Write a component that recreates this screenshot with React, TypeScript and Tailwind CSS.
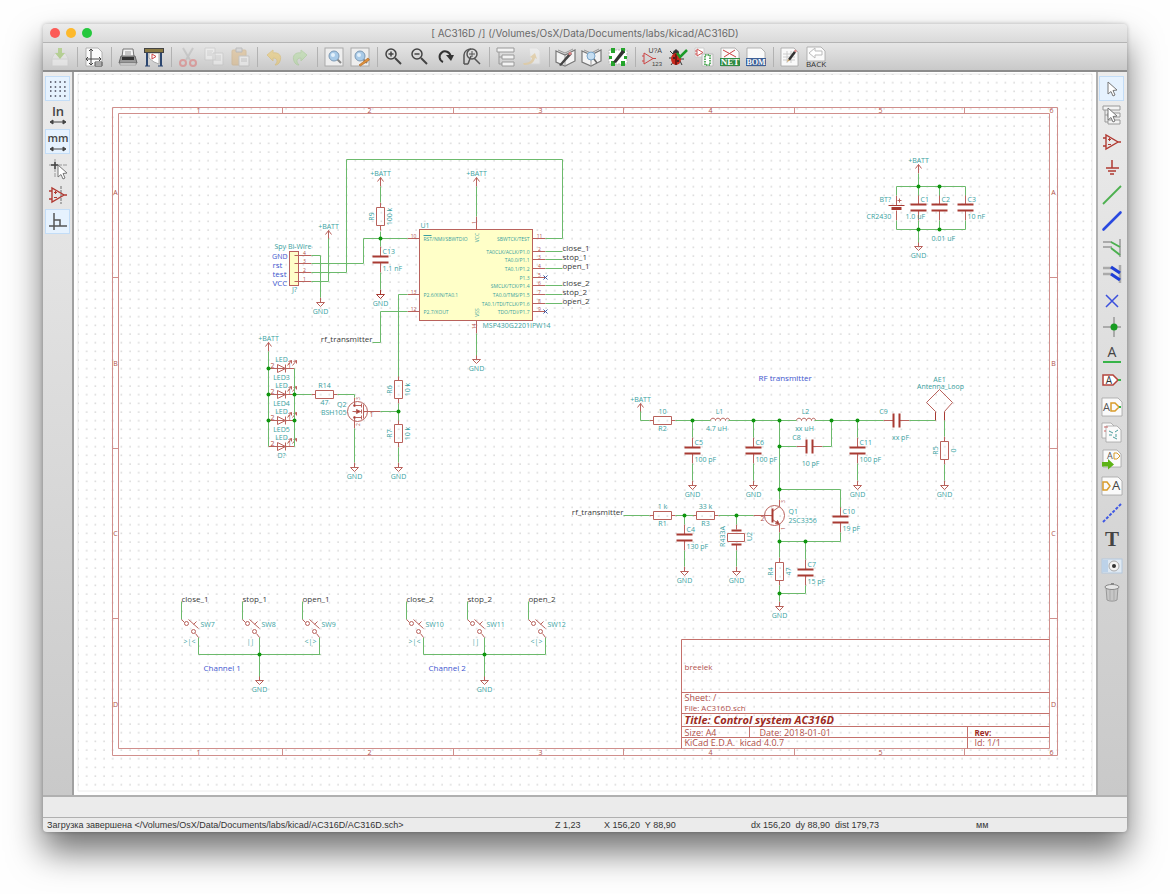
import { type ReactNode } from "react";
import clsx from "clsx";

/* ---------- toolbar icons (20x20) ---------- */

const Icon = ({ children, faded }: { children: ReactNode; faded?: boolean }) => (
  <svg
    viewBox="0 0 20 20"
    className={clsx("h-5 w-5 overflow-visible", faded && "opacity-40")}
    fill="none"
    aria-hidden="true"
  >
    {children}
  </svg>
);

const Sheet = ({ x = 2, y = 1, w = 16, h = 18 }: { x?: number; y?: number; w?: number; h?: number }) => (
  <path
    d={`M${x} ${y}h${w - 4}l4 4v${h - 4}h${-w}z`}
    fill="#fafafa"
    stroke="#a3a3a3"
    strokeWidth=".8"
  />
);

const Pencil = () => (
  <>
    <path d="M8 12l6-8 2 1.500-6 8z" fill="#333" />
    <path d="M14 4l1-1.500 2 1.500-1 1.500z" fill="#d88" />
    <path d="M8 12l-1 3 3-1.500z" fill="#c9a36a" />
  </>
);

const Book = () => (
  <>
    <path d="M0 4l9 4 10-5v11l-10 5-9-4z" fill="#f4f4f4" stroke="#777" strokeWidth="1.200" />
    <path d="M9 8v11M2 3l7 3 8-4" stroke="#999" />
  </>
);

const Amp = () => (
  <>
    <path d="M4 3v14l12-7zM1 6h3M1 14h3M16 10h3" stroke="#b03a32" strokeWidth="1.400" />
    <path d="M6 7.500h3M7.500 6v3M6 12.500h3" stroke="#b03a32" />
  </>
);

const Cursor = ({ dx = 0, dy = 0 }: { dx?: number; dy?: number }) => (
  <path
    transform={`translate(${dx} ${dy})`}
    d="M6 3v12l3-2.500 2 4.500 2-1-2-4.500 4-.5z"
    fill="#fff"
    stroke="#777"
  />
);

const Tree = () => (
  <>
    <path d="M3 5v12M3 10h4M3 17h4" stroke="#999" />
    <path d="M1 1h17v4H1zM6 8h12v4H6zM6 15h12v4H6z" fill="#f3f3f3" stroke="#999" />
  </>
);

const Lens = () => (
  <>
    <rect x="1" y="1" width="18" height="18" fill="#eee" stroke="#aaa" />
    <path d="M13 12l4 4" stroke="#888" strokeWidth="2" />
    <circle cx="10" cy="9" r="5" fill="#a9cbe8" stroke="#7d9ab5" />
    <circle cx="9" cy="8" r="2" fill="#e3f1fb" />
  </>
);

const Magnifier = ({ plus }: { plus?: boolean }) => (
  <>
    <circle cx="7" cy="7" r="5" stroke="#444" strokeWidth="1.500" />
    <path d="M11 11l6 6" stroke="#444" strokeWidth="2" />
    <path d={plus ? "M4.500 7h5M7 4.500v5" : "M4.500 7h5"} stroke="#444" strokeWidth="1.500" />
  </>
);

type Tool = { name: string; icon: ReactNode; faded?: boolean; active?: boolean };

const mainTools: (Tool | null)[] = [
  {
    name: "Save", faded: true, icon: (
      <>
        <path d="M2 11l3-5h10l3 5v8H2z" fill="#f2f2f2" stroke="#ccc" />
        <path d="M2 12h16v7H2z" fill="#fff" stroke="#ccc" />
        <path d="M8 1h4v5h3l-5 6-5-6h3z" fill="#7fbf2d" />
      </>
    ),
  },
  null,
  {
    name: "Page settings", icon: (
      <>
        <Sheet />
        <path d="M7 2v16M3 12h14M5 4l2-2 2 2M5 16l2 2 2-2M4 10l-2 2 2 2M15 10l2 2-2 2" stroke="#444" />
        <path d="M11 15h7v4h-7zM11 17h7" fill="#fff" stroke="#555" />
      </>
    ),
  },
  null,
  {
    name: "Print", icon: (
      <>
        <path d="M5 2h10l1 8H4z" fill="#f4f4f4" stroke="#777" />
        <path d="M7 5h6M7 7h6" stroke="#999" />
        <path d="M3 9h14l2 7H1z" fill="#999" stroke="#666" />
        <path d="M4 10h12v3H4z" fill="#333" />
        <path d="M2 16h16v2H2z" fill="#ddd" stroke="#888" strokeWidth=".6" />
      </>
    ),
  },
  {
    name: "Plot", icon: (
      <>
        <path d="M3 5v14M17 5v14" stroke="#2c4770" strokeWidth="2" />
        <path d="M1 19h5M14 19h5" stroke="#2c4770" />
        <path d="M5 6h10v11l-5-2-5-4z" fill="#fff" stroke="#aaa" />
        <path d="M8 7v5l4-2.500z" stroke="#c44" />
        <rect x="0.500" y="1.500" width="19" height="4" fill="#8a7a44" stroke="#444" />
      </>
    ),
  },
  null,
  {
    name: "Cut", faded: true, icon: (
      <>
        <path d="M5 1l7 12M15 1L8 13" stroke="#aaa" strokeWidth="2" />
        <circle cx="5" cy="16" r="3" stroke="#e05252" strokeWidth="2" />
        <circle cx="15" cy="16" r="3" stroke="#e05252" strokeWidth="2" />
      </>
    ),
  },
  {
    name: "Copy", faded: true, icon: (
      <>
        <path d="M1 1h10v12H1zM9 6h10v12H9z" fill="#fff" stroke="#bbb" />
        <path d="M3 4h6M3 6h5M3 8h5M11 9h6M11 11h6M11 13h6" stroke="#bbb" />
      </>
    ),
  },
  {
    name: "Paste", faded: true, icon: (
      <>
        <rect x="2" y="3" width="14" height="15" rx="1" fill="#e0ad63" stroke="#c99a55" />
        <path d="M6 1h6v4H6z" fill="#ccc" stroke="#888" />
        <path d="M9 9h10v10H9z" fill="#fff" stroke="#aaa" />
        <path d="M11 12h6M11 14h6" stroke="#aaa" />
      </>
    ),
  },
  null,
  {
    name: "Undo", faded: true, icon: (
      <path d="M3 8l6-5v3c6-1 9 3 7 8-1 3-3 4-5 4 3-3 3-7-2-7v3z" fill="#f5c33a" stroke="#dba92a" />
    ),
  },
  {
    name: "Redo", faded: true, icon: (
      <path d="M17 8l-6-5v3C5 5 2 9 4 14c1 3 3 4 5 4-3-3-3-7 2-7v3z" fill="#a7dd8b" stroke="#8cc670" />
    ),
  },
  null,
  { name: "Find", icon: <Lens /> },
  {
    name: "Find and replace", icon: (
      <>
        <Lens />
        <path d="M9 18l9-7 1.500 2-9 6z" fill="#e0913a" stroke="#a65f1c" strokeWidth=".6" />
      </>
    ),
  },
  null,
  { name: "Zoom in", icon: <Magnifier plus /> },
  { name: "Zoom out", icon: <Magnifier /> },
  {
    name: "Redraw view", icon: (
      <>
        <path d="M7 15A5.500 5.500 0 1 1 14.500 9" stroke="#333" strokeWidth="2" />
        <path d="M10 8h8l-3 6z" fill="#333" />
      </>
    ),
  },
  {
    name: "Zoom to fit", icon: (
      <>
        <path d="M2 17V8c0-4 4-6 7-6M2 17h4M9 9l-3 8M12 11l6 6" stroke="#555" strokeWidth="1.500" />
        <circle cx="10" cy="7" r="5" stroke="#555" strokeWidth="1.500" />
        <path d="M7 7h6M10 4v6" stroke="#555" />
      </>
    ),
  },
  null,
  { name: "Navigate hierarchy", icon: <Tree /> },
  {
    name: "Leave sheet", faded: true, icon: (
      <>
        <path d="M7 1h8l3 3v13H9z" fill="#fff" stroke="#ddd" />
        <path d="M1 16c5 0 8-1 9-5l-2-1 5-4 2 6-2-1c-1 5-5 7-11 7z" fill="#f0c674" />
      </>
    ),
  },
  null,
  {
    name: "Library editor", icon: (
      <>
        <Book />
        <path d="M3 18l11-13 2 2-11 12z" fill="#444" />
        <path d="M12 7l2-2.500 2 2-2 2z" fill="#d88" />
      </>
    ),
  },
  {
    name: "Library browser", icon: (
      <>
        <Book />
        <circle cx="9" cy="9" r="4" fill="#c5def2" stroke="#7aa5c9" />
        <path d="M12 12l3 4" stroke="#666" strokeWidth="1.500" />
      </>
    ),
  },
  {
    name: "Footprint editor", icon: (
      <>
        <rect x="1" y="3" width="18" height="14" fill="#fff" stroke="#bbb" strokeDasharray="2 1" />
        <path d="M3 1h4v5H3zM13 1h4v5h-4zM3 14h4v5H3zM13 14h4v5h-4zM1 9h3v3H1zM16 9h3v3h-3z" fill="#25a52c" />
        <path d="M5 15l9-12 3 2-9 11z" fill="#333" />
      </>
    ),
  },
  null,
  {
    name: "Annotate schematic", icon: (
      <>
        <path d="M2 6v11l9-5.500zM0 9h2M0 14h2M11 11.500h3" stroke="#c44" />
        <text x="20" y="6" textAnchor="end" className="fill-[#444] text-[7px]">U?A</text>
        <text x="20" y="19" textAnchor="end" className="fill-[#444] text-[6px]">123</text>
      </>
    ),
  },
  {
    name: "Electrical rules check", icon: (
      <>
        <path d="M2 4l4 4M1 11h4M3 18l3-4M14 18l-2-4M8 2v4M16 12h-4" stroke="#333" />
        <circle cx="8" cy="6" r="3" fill="#333" />
        <ellipse cx="8" cy="12" rx="5" ry="6" fill="#c8291e" />
        <path d="M8 7v11" stroke="#300" />
        <circle cx="6" cy="11" r="1" fill="#222" />
        <circle cx="10" cy="14" r="1" fill="#222" />
        <path d="M9 6l3 4 7-7" stroke="#1c9a28" strokeWidth="2.500" />
      </>
    ),
  },
  {
    name: "Assign footprints", icon: (
      <>
        <path d="M1 1h9v9H1z" fill="#fff" stroke="#ccc" />
        <path d="M3 2v7l6-3.500zM1 4h2M1 7h2" stroke="#c55" />
        <path d="M8 7h11v12H8z" fill="#f3f3f3" stroke="#bbb" />
        <path d="M11 8h5v10h-5z" fill="#fff" stroke="#2f9b3a" strokeDasharray="1.500 1" strokeWidth="1.500" />
      </>
    ),
  },
  {
    name: "Generate netlist", icon: (
      <>
        <Sheet x={1} w={18} />
        <path d="M3 3l13 7M15 3L4 10" stroke="#c44" />
        <rect x="0" y="11" width="20" height="8" fill="#2f8a43" />
        <text x="10" y="18" textAnchor="middle" className="fill-white font-['Liberation_Serif',serif] text-[9px] font-bold">NET</text>
      </>
    ),
  },
  {
    name: "Bill of materials", icon: (
      <>
        <Sheet x={1} w={18} />
        <rect x="0" y="11" width="20" height="8" fill="#3d5f96" />
        <text x="10" y="18" textAnchor="middle" className="fill-white font-['Liberation_Serif',serif] text-[8px] font-bold">BOM</text>
      </>
    ),
  },
  null,
  {
    name: "Edit fields", icon: (
      <>
        <Sheet x={1} w={17} />
        <path d="M3 7h12M3 10h12M3 13h12M7 4v12M11 4v12" stroke="#ccc" />
        <Pencil />
      </>
    ),
  },
  {
    name: "Back annotate", icon: (
      <>
        <Sheet x={1} y={0} w={18} h={14} />
        <path d="M3 6l6-5v3h7v4H9v3z" fill="#fff" stroke="#bbb" />
        <text x="10" y="20" textAnchor="middle" className="fill-[#333] font-['Open_Sans',sans-serif] text-[8px]">BACK</text>
      </>
    ),
  },
];

const unitArrow = <path d="M3 17h14M5 15l-3 2 3 2zM15 15l3 2-3 2z" fill="#444" stroke="#444" />;

const optionTools: Tool[] = [
  {
    name: "Grid", active: true, icon: (
      <path
        d="M2 3h17M2 8h17M2 12h17M2 17h17"
        stroke="#445"
        strokeWidth="1.500"
        strokeDasharray="1.500 3.200"
      />
    ),
  },
  {
    name: "Inches", icon: (
      <>
        <text x="10" y="11" textAnchor="middle" className="fill-[#444] font-['Open_Sans',sans-serif] text-[13px] font-semibold">In</text>
        {unitArrow}
      </>
    ),
  },
  {
    name: "Millimetres", active: true, icon: (
      <>
        <text x="10" y="10" textAnchor="middle" className="fill-[#444] font-['Open_Sans',sans-serif] text-[11px] font-semibold">mm</text>
        {unitArrow}
      </>
    ),
  },
  {
    name: "Cursor shape", icon: (
      <>
        <path d="M7 1v18M1 7h18" stroke="#999" strokeDasharray="6 1" />
        <path d="M7 4v7M3 7h7" stroke="#444" strokeWidth="1.500" />
        <Cursor dx={4} dy={4} />
      </>
    ),
  },
  {
    name: "Hidden pins", icon: (
      <>
        <path d="M13 1v18" stroke="#aaa" strokeWidth="2" strokeDasharray="3 1" />
        <Amp />
      </>
    ),
  },
  {
    name: "Right angle wires", active: true, icon: (
      <path d="M6 2v17M1 15h18M6 9h6v6" stroke="#555" strokeWidth="1.500" />
    ),
  },
];

const placeTools: Tool[] = [
  { name: "Select", active: true, icon: <Cursor /> },
  { name: "Hierarchy", icon: <><Tree /><Cursor /></> },
  { name: "Place component", icon: <Amp /> },
  { name: "Place power port", icon: <path d="M10 2v8M4 10h13M6 13h8M8 16h4" stroke="#b03a32" strokeWidth="1.500" /> },
  { name: "Place wire", icon: <path d="M1 19L19 1" stroke="#4cb04f" strokeWidth="1.800" /> },
  { name: "Place bus", icon: <path d="M1.500 18.500l17-17" stroke="#2a49e0" strokeWidth="2.600" strokeLinecap="round" /> },
  {
    name: "Wire to bus entry", icon: (
      <>
        <path d="M18 1v18M1 4h9M1 9h9" stroke="#aaa" strokeWidth="2" />
        <path d="M9 4l9 5M9 10l9 7" stroke="#4cb04f" strokeWidth="2" />
      </>
    ),
  },
  {
    name: "Bus to bus entry", icon: (
      <>
        <path d="M18 1v18M1 4h9M1 10h9" stroke="#aaa" strokeWidth="2.500" />
        <path d="M9 3l9 6M9 10l9 6" stroke="#1f3fd6" strokeWidth="3.200" />
      </>
    ),
  },
  { name: "No connect flag", icon: <path d="M4 4l12 12M16 4L4 16" stroke="#3b50dd" strokeWidth="1.500" /> },
  {
    name: "Junction", icon: (
      <>
        <path d="M12 0v20M1 10h18" stroke="#999" strokeWidth="1.500" />
        <circle cx="12" cy="10" r="3.500" fill="#189c22" />
      </>
    ),
  },
  {
    name: "Net name", icon: (
      <>
        <text x="10" y="13" textAnchor="middle" className="fill-[#444] font-['Open_Sans',sans-serif] text-[14px]">A</text>
        <path d="M1 18h18" stroke="#38b449" strokeWidth="2" />
      </>
    ),
  },
  {
    name: "Global label", icon: (
      <>
        <path d="M1 5h10l5 5-5 5H1z" fill="#fff" stroke="#b4443c" strokeWidth="1.500" />
        <path d="M16 10h3" stroke="#38b449" strokeWidth="2" />
        <text x="7" y="14" textAnchor="middle" className="fill-[#333] font-['Open_Sans',sans-serif] text-[10px]">A</text>
      </>
    ),
  },
  {
    name: "Hierarchical label", icon: (
      <>
        <Sheet x={0} y={1} w={20} />
        <text x="1" y="14" className="fill-[#555] font-['Open_Sans',sans-serif] text-[11px]">A</text>
        <path d="M9 6h4l4 4-4 4H9z" stroke="#d99c2b" strokeWidth="1.500" />
        <path d="M17 10h2" stroke="#38b449" strokeWidth="2" />
      </>
    ),
  },
  {
    name: "Hierarchical sheet", icon: (
      <>
        <Sheet x={0} y={0} w={13} h={15} />
        <Sheet x={4} y={3} w={15} h={16} />
        <path d="M7 8l4 2M7 12h3M13 9l3-2M11 14l4 2M14 11v3" stroke="#4a9c9c" />
        <path d="M2 4h4M2 8h2" stroke="#c66" />
      </>
    ),
  },
  {
    name: "Import sheet pins", icon: (
      <>
        <Sheet x={1} y={0} w={18} h={17} />
        <text x="5" y="9" className="fill-[#555] font-['Open_Sans',sans-serif] text-[9px]">A</text>
        <path d="M12 3h3l3 3-3 3h-3z" stroke="#d99c2b" />
        <path d="M0 12h6V9l6 5.500-6 5v-3H0z" fill="#5db316" />
      </>
    ),
  },
  {
    name: "Sheet pin", icon: (
      <>
        <Sheet x={0} y={1} w={20} />
        <path d="M1 6h4l3 4-3 4H1z" stroke="#d99c2b" strokeWidth="1.500" />
        <text x="10" y="14" className="fill-[#444] font-['Open_Sans',sans-serif] text-[13px]">A</text>
      </>
    ),
  },
  { name: "Graphic line", icon: <path d="M1 19L19 1" stroke="#3f58e3" strokeWidth="2" strokeDasharray="3 1.500" /> },
  {
    name: "Text", icon: (
      <text x="10" y="17" textAnchor="middle" className="fill-[#444] font-['Liberation_Serif',serif] text-[21px] font-bold">T</text>
    ),
  },
  {
    name: "Image", icon: (
      <>
        <rect x="0" y="3" width="20" height="14" fill="#dfe9f3" stroke="#b4c8dd" />
        <rect x="0" y="4" width="6" height="12" fill="#bcd2e9" />
        <circle cx="12" cy="10" r="5" fill="#f3f3f3" stroke="#aaa" />
        <circle cx="12" cy="10" r="2" fill="#333" />
      </>
    ),
  },
  {
    name: "Delete", icon: (
      <>
        <path d="M4 5h12l-1 13c-2 1.500-8 1.500-10 0z" fill="#c6c6c6" stroke="#999" />
        <path d="M8 7v11M12 7v11" stroke="#a9a9a9" />
        <path d="M9 2h3" stroke="#888" strokeWidth="2" />
        <ellipse cx="10" cy="5" rx="7" ry="2.500" fill="#e6e6e6" stroke="#888" />
      </>
    ),
  },
];

const SideButton = ({ tool }: { tool: Tool }) => (
  <button
    type="button"
    aria-label={tool.name}
    className={clsx(
      "flex h-[25px] w-[25px] items-center justify-center border",
      tool.active ? "border-[#c3ddf7] bg-[#e6f2fe]" : "border-transparent",
    )}
  >
    <Icon>{tool.icon}</Icon>
  </button>
);

/* ---------- schematic primitives ---------- */

type At = { x: number; y: number };

const tones = {
  teal: "fill-[#3a9f9f]",
  dark: "fill-[#3a3a3a]",
  blue: "fill-[#4257d0]",
  red: "fill-[#b0504a]",
};

const sizes = { pin: "text-[5px]", sm: "text-[7px]", md: "text-[8px]", lg: "text-[9px]" };

const Label = ({
  x, y, children, tone = "teal", size = "sm", anchor = "start", upright,
}: At & {
  children: ReactNode;
  tone?: keyof typeof tones;
  size?: keyof typeof sizes;
  anchor?: "start" | "middle" | "end";
  upright?: boolean;
}) => (
  <text
    x={x}
    y={y}
    textAnchor={anchor}
    dominantBaseline="central"
    transform={upright ? `rotate(-90 ${x} ${y})` : undefined}
    className={clsx("whitespace-pre", tones[tone], sizes[size])}
    stroke="none"
  >
    {children}
  </text>
);

const Gnd = ({ x, y }: At) => (
  <>
    <path d={`M${x} ${y}v5m-4 0h8l-4 4z`} />
    <Label x={x} y={y + 14} anchor="middle">GND</Label>
  </>
);

const Batt = ({ x, y }: At) => (
  <>
    <path d={`M${x} ${y + 9}v-9m-3 4l3-4l3 4`} />
    <Label x={x} y={y - 4} anchor="middle">+BATT</Label>
  </>
);

const ResV = ({ x, y, name, value }: At & { name: string; value: string }) => (
  <>
    <path d={`M${x} ${y - 14}v5m-4 0h8v18h-8zm4 18v5`} />
    <Label x={x - 9} y={y} anchor="middle" upright>{name}</Label>
    <Label x={x + 9} y={y} anchor="middle" upright>{value}</Label>
  </>
);

const ResH = ({ x, y, top, bottom }: At & { top: string; bottom: string }) => (
  <>
    <path d={`M${x - 13} ${y}h4m0 -4h18v8h-18zm18 4h4`} />
    <Label x={x} y={y - 9} anchor="middle">{top}</Label>
    <Label x={x} y={y + 8} anchor="middle">{bottom}</Label>
  </>
);

const CapV = ({ x, y, name, value }: At & { name?: string; value?: string }) => (
  <>
    <path d={`M${x} ${y - 13}v10m0 6v10`} />
    <path d={`M${x - 8} ${y - 3}h16m-16 6h16`} stroke="#a83a32" strokeWidth="2" />
    {name && <Label x={x + 2} y={y - 8}>{name}</Label>}
    {value && <Label x={x + 2} y={y + 9}>{value}</Label>}
  </>
);

const CapH = ({ x, y }: At) => (
  <>
    <path d={`M${x - 13} ${y}h10m6 0h10`} />
    <path d={`M${x - 3} ${y - 7}v14m6 -14v14`} stroke="#a83a32" strokeWidth="2" />
  </>
);

const Coil = ({ x, y }: At) => (
  <path d={`M${x - 9} ${y}c0 -3 5 -3 5 0c0 -3 5 -3 5 0c0 -3 5 -3 5 0c0 -3 4 -3 4 0`} />
);

const Led = ({ y, name }: { y: number; name: string }) => (
  <>
    <path d={`M269 ${y}h26M278 ${y - 4}v8l8 -4zM286 ${y - 4}v8M288 ${y - 3}l4 -5m-3 1l3 -1v3M293 ${y - 3}l4 -5m-3 1l3 -1v3`} />
    <Label x={282} y={y - 9} anchor="middle">LED</Label>
    <Label x={282} y={y + 9} anchor="middle">{name}</Label>
    <Label x={273} y={y - 3} tone="red" anchor="middle">2</Label>
    <Label x={290} y={y - 3} tone="red" anchor="middle">1</Label>
  </>
);

const Switch = ({ x, net, name, mark }: { x: number; net: string; name: string; mark: string }) => (
  <>
    <path d={`M${x} 602v18M${x + 17} 638v17`} className="stroke-[#6cba6c]" />
    <path d={`M${x} 620l3 3M${x + 7} 620l10 9M${x + 12} 625l3 -3M${x + 14} 634l3 4`} />
    <circle cx={x + 5} cy={624} r={2} />
    <circle cx={x + 12} cy={632} r={2} />
    <Label x={x} y={599} tone="dark" size="md">{net}</Label>
    <Label x={x + 19} y={625}>{name}</Label>
    <Label x={x + 8} y={642} anchor="middle">{mark}</Label>
  </>
);

const junctions = [
  [381, 239], [269, 369], [269, 395], [269, 421], [295, 395], [295, 421], [399, 412],
  [919, 187], [940, 187], [919, 230], [940, 230],
  [693, 421], [754, 421], [780, 421], [832, 421], [858, 421], [780, 447], [780, 490],
  [685, 516], [737, 516], [780, 542], [806, 542], [780, 594], [260, 655], [485, 655],
];

const wires = [
  // controller
  "M381 187v16M381 232v15M381 273v17M477 187v30M477 334v22",
  "M546 239h17V160H347v113H312M408 239H364v25H312M312 256h9v42M312 282h17v-43",
  "M408 295h-9v82M408 312h-27v31h-8",
  "M546 252h17M546 260h17M546 269h17M546 286h17M546 295h17M546 304h17",
  // led driver
  "M269 352v95M295 369v78M295 395h17M338 395h17v3M355 429v34M381 412h18M399 404v17M399 448v15",
  // decoupling
  "M919 174v13M897 187h69M897 230h69M897 187v9M966 187v9M919 187v9M940 187v9M897 221v9M919 221v22M940 221v9M966 221v9",
  // rf stage
  "M641 412v9h9M676 421h35M729 421h68M815 421h69M910 421h26M693 421v17M754 421v17M858 421v17",
  "M693 464v17M754 464v17M858 464v17M945 421v16M945 465v16M780 421v79M780 447h17M823 447h9v-26",
  "M780 490h61v18M841 533v9h-61M780 533v25M780 586v16M806 542v18M806 586v8h-26",
  "M624 516h26M676 516h18M719 516h35M685 516v9M685 551v16M737 516v9M737 551v16",
  // switches
  "M199 655h122M260 655v22M424 655h122M485 655v22",
];

const rightPins: [number, string, string][] = [
  [239, "11", "SBWTCK/TEST"],
  [252, "2", "TA0CLK/ACLK/P1.0"],
  [260, "3", "TA0.0/P1.1"],
  [269, "4", "TA0.1/P1.2"],
  [278, "5", "P1.3"],
  [286, "6", "SMCLK/TCK/P1.4"],
  [295, "7", "TA0.0/TMS/P1.5"],
  [304, "8", "TA0.1/TDI/TCLK/P1.6"],
  [312, "9", "TDO/TDI/P1.7"],
];

const leftPins: [number, string, string][] = [
  [239, "10", "RST/NMI/SBWTDIO"],
  [295, "13", "P2.6/XIN/TA0.1"],
  [312, "12", "P2.7/XOUT"],
];

const nets: [number, string][] = [
  [248, "close_1"], [257, "stop_1"], [266, "open_1"],
  [283, "close_2"], [292, "stop_2"], [301, "open_2"],
];

const columns = [199, 370, 541, 711, 881];
const rows: [string, number][] = [["A", 193], ["B", 364], ["C", 534], ["D", 705]];

const SheetFrame = () => (
  <g stroke="#d08f8c">
    <path d="M113 108h945v648H113zM119 114h931v635H119z" />
    {[283, 454, 624, 795, 965].map((x) => (
      <path key={x} d={`M${x} 108v6M${x} 749v7`} />
    ))}
    {[278, 449, 619].map((y) => (
      <path key={y} d={`M113 ${y}h6M1050 ${y}h8`} />
    ))}
    {[...columns, 1052].map((x, i) => (
      <g key={x}>
        <Label x={x} y={111} tone="red" anchor="middle">{i + 1}</Label>
        <Label x={x} y={753} tone="red" anchor="middle">{i + 1}</Label>
      </g>
    ))}
    {rows.map(([name, y]) => (
      <g key={name}>
        <Label x={116} y={y} tone="red" anchor="middle">{name}</Label>
        <Label x={1054} y={y} tone="red" anchor="middle">{name}</Label>
      </g>
    ))}
    <path d="M682 749V640h368M682 693h368M682 714h368M682 727h368M682 738h368M750 727v11M968 727v22" stroke="#c4706b" />
    <Label x={685} y={667} tone="red" size="md">breelek</Label>
    <Label x={685} y={698} tone="red" size="lg">Sheet: /</Label>
    <Label x={685} y={708} tone="red" size="md">File: AC316D.sch</Label>
    <text x={685} y={724} stroke="none" className="fill-[#9c2a22] text-[11px] font-bold italic">
      Title: Control system AC316D
    </text>
    <Label x={685} y={733} tone="red" size="lg">Size: A4</Label>
    <Label x={760} y={733} tone="red" size="lg">Date: 2018-01-01</Label>
    <text x={975} y={736} stroke="none" className="fill-[#9c2a22] text-[8px] font-bold">Rev:</text>
    <Label x={685} y={743} tone="red" size="lg">{"KiCad E.D.A.  kicad 4.0.7"}</Label>
    <Label x={975} y={743} tone="red" size="lg">Id: 1/1</Label>
  </g>
);

const Controller = () => (
  <>
    <rect x={420} y={230} width={113} height={91} fill="#ffffc8" />
    <path d="M477 217v13M477 321v13" />
    <Label x={421} y={226}>U1</Label>
    <Label x={483} y={326}>MSP430G2201IPW14</Label>
    <Label x={477} y={238} size="pin" anchor="middle" upright>VCC</Label>
    <Label x={477} y={313} size="pin" anchor="middle" upright>VSS</Label>
    <Label x={474} y={223} size="pin" tone="red" anchor="middle" upright>1</Label>
    <Label x={474} y={327} size="pin" tone="red" anchor="middle" upright>14</Label>
    <path d="M424 236h8" stroke="#3a9f9f" />
    {rightPins.map(([y, num, name]) => (
      <g key={num}>
        <path d={`M533 ${y}h13`} />
        <Label x={530} y={y} size="pin" anchor="end">{name}</Label>
        <Label x={540} y={y - 3} size="pin" tone="red" anchor="middle">{num}</Label>
      </g>
    ))}
    {leftPins.map(([y, num, name]) => (
      <g key={num}>
        <path d={`M408 ${y}h12`} />
        <Label x={424} y={y} size="pin">{name}</Label>
        <Label x={414} y={y - 3} size="pin" tone="red" anchor="middle">{num}</Label>
      </g>
    ))}
    <path d="M544 276l4 4m0-4l-4 4M544 310l4 4m0-4l-4 4" stroke="#3c5ca8" />
    {nets.map(([y, name]) => (
      <Label key={name} x={563} y={y} tone="dark" size="md">{name}</Label>
    ))}
    <Batt x={477} y={178} />
    <Gnd x={477} y={355} />
  </>
);

const Programmer = () => (
  <>
    <rect x={290} y={252} width={9} height={34} fill="#ffffc8" />
    <path d="M295 256h17M295 264h17M295 273h17M295 282h17" />
    {[256, 264, 273, 282].map((y, i) => (
      <Label key={y} x={305} y={y - 3} size="pin" tone="red" anchor="middle">{4 - i}</Label>
    ))}
    <Label x={275} y={247}>Spy Bi-Wire</Label>
    <Label x={288} y={257} tone="blue" size="sm" anchor="end">GND</Label>
    <Label x={273} y={265} tone="blue" size="md">rst</Label>
    <Label x={273} y={274} tone="blue" size="md">test</Label>
    <Label x={273} y={283} tone="blue" size="md">VCC</Label>
    <Label x={295} y={290} anchor="middle">J?</Label>
    <Gnd x={321} y={298} />
    <Batt x={329} y={231} />
    <Batt x={381} y={178} />
    <ResV x={381} y={217} name="R9" value="100 k" />
    <CapV x={381} y={260} name="C13" value="1.1 nF" />
    <g stroke="#a83a32">
      <Gnd x={381} y={290} />
    </g>
  </>
);

const LedDriver = () => (
  <>
    <Batt x={269} y={343} />
    <Led y={369} name="LED3" />
    <Led y={395} name="LED4" />
    <Led y={421} name="LED5" />
    <Led y={447} name="D?" />
    <ResH x={325} y={395} top="R14" bottom="47" />
    <circle cx={358} cy={412} r={10} />
    <path d="M355 398v8h7M355 429v-11h7M353 412h8M364 405v14M362 404v4M362 410v4M362 416v4M364 412h17" />
    <path d="M357 410v4l4 -2z" fill="#a83a32" />
    <circle cx={355} cy={406} r={1} fill="#a83a32" />
    <circle cx={355} cy={418} r={1} fill="#a83a32" />
    <Label x={358} y={399} size="pin" tone="red" anchor="middle" upright>3</Label>
    <Label x={358} y={425} size="pin" tone="red" anchor="middle" upright>2</Label>
    <Label x={372} y={415} tone="red" anchor="middle">1</Label>
    <Label x={347} y={405} anchor="end">Q2</Label>
    <Label x={347} y={413} anchor="end">BSH105</Label>
    <Gnd x={355} y={463} />
    <ResV x={399} y={390} name="R6" value="10 k" />
    <ResV x={399} y={434} name="R7" value="10 k" />
    <Gnd x={399} y={463} />
    <Label x={373} y={339} tone="dark" size="md" anchor="end">rf_transmitter</Label>
  </>
);

const Decoupling = () => (
  <>
    <Batt x={919} y={165} />
    <path d="M897 196v10M897 211v10" />
    <path d="M889 206h16" stroke="#a83a32" />
    <path d="M892 209h10" stroke="#a83a32" strokeWidth="3" />
    <path d="M898 201h4m-2 -2v4" />
    <Label x={880} y={200}>BT?</Label>
    <Label x={867} y={217}>CR2430</Label>
    <CapV x={919} y={208} name="C1" />
    <CapV x={940} y={208} name="C2" />
    <CapV x={966} y={208} name="C3" value="10 nF" />
    <Label x={906} y={217}>1.0 uF</Label>
    <Label x={932} y={239}>0.01 uF</Label>
    <Gnd x={919} y={242} />
  </>
);

const RfStage = () => (
  <>
    <Label x={759} y={378} tone="blue" size="md">RF transmitter</Label>
    <Batt x={641} y={404} />
    <ResH x={663} y={421} top="10" bottom="R2" />
    <Coil x={720} y={421} />
    <Label x={720} y={412} anchor="middle">L1</Label>
    <Label x={717} y={429} anchor="middle">4.7 uH</Label>
    <Coil x={806} y={421} />
    <Label x={806} y={412} anchor="middle">L2</Label>
    <Label x={805} y={429} anchor="middle">xx uH</Label>
    <CapV x={693} y={451} name="C5" value="100 pF" />
    <CapV x={754} y={451} name="C6" value="100 pF" />
    <CapV x={858} y={451} name="C11" value="100 pF" />
    <Gnd x={693} y={481} />
    <Gnd x={754} y={481} />
    <Gnd x={858} y={481} />
    <CapH x={810} y={447} />
    <Label x={797} y={438} anchor="middle">C8</Label>
    <Label x={811} y={464} anchor="middle">10 pF</Label>
    <CapH x={897} y={421} />
    <Label x={884} y={412} anchor="middle">C9</Label>
    <Label x={901} y={438} anchor="middle">xx pF</Label>
    <path d="M936 421v-9l-9 -9l13 -13l13 13l-8 9v9" />
    <path d="M936 421v-8M945 421v-8" stroke="#a83a32" />
    <Label x={940} y={380} anchor="middle">AE1</Label>
    <Label x={941} y={387} anchor="middle">Antenna_Loop</Label>
    <ResV x={945} y={451} name="R5" value="0" />
    <Gnd x={945} y={481} />

    <Label x={624} y={512} tone="dark" size="md" anchor="end">rf_transmitter</Label>
    <ResH x={663} y={516} top="1 k" bottom="R1" />
    <ResH x={706} y={516} top="33 k" bottom="R3" />
    <CapV x={685} y={538} name="C4" value="130 pF" />
    <Gnd x={685} y={567} />
    <path d="M737 525v5M737 545v6M728 534h17v8h-17z" />
    <path d="M732 531h10M732 545h10" stroke="#a83a32" strokeWidth="2" />
    <Label x={723} y={537} anchor="middle" upright>R433A</Label>
    <Label x={750} y={537} anchor="middle" upright>U2</Label>
    <Gnd x={737} y={567} />

    <circle cx={775} cy={516} r={10} />
    <path d="M754 516h19M773 512l7 -5v-7M773 520l7 5v8" />
    <path d="M773 509v14" stroke="#a83a32" strokeWidth="2" />
    <path d="M780 525l-2 -4l-2 3z" fill="#a83a32" />
    <Label x={783} y={502} size="pin" tone="red" anchor="middle" upright>3</Label>
    <Label x={783} y={529} size="pin" tone="red" anchor="middle" upright>1</Label>
    <Label x={763} y={519} tone="red" anchor="middle">2</Label>
    <Label x={789} y={512}>Q1</Label>
    <Label x={789} y={521}>2SC3356</Label>
    <CapV x={841} y={520} name="C10" value="19 pF" />
    <ResV x={780} y={572} name="R4" value="47" />
    <CapV x={806} y={573} name="C7" value="15 pF" />
    <Gnd x={780} y={602} />
  </>
);

const Channels = () => (
  <>
    <Switch x={182} net="close_1" name="SW7" mark=">|<" />
    <Switch x={243} net="stop_1" name="SW8" mark="||" />
    <Switch x={303} net="open_1" name="SW9" mark="<|>" />
    <Switch x={407} net="close_2" name="SW10" mark=">|<" />
    <Switch x={468} net="stop_2" name="SW11" mark="||" />
    <Switch x={529} net="open_2" name="SW12" mark="<|>" />
    <Label x={204} y={668} tone="blue" size="md">Channel 1</Label>
    <Label x={429} y={668} tone="blue" size="md">Channel 2</Label>
    <Gnd x={260} y={676} />
    <Gnd x={485} y={676} />
  </>
);

const Schematic = () => (
  <svg
    viewBox="74 72 1022 723"
    className="block h-auto w-full bg-white font-['Open_Sans',sans-serif]"
    fill="none"
    role="img"
    aria-label="Schematic"
  >
    <defs>
      <pattern id="grid" x="264.700" y="390.700" width="8.667" height="8.667" patternUnits="userSpaceOnUse">
        <rect x="3.400" y="3.400" width="1.200" height="1.200" fill="#bdbdbd" />
      </pattern>
    </defs>
    <path d="M78 74h1014v717H78z" stroke="#ececec" />
    <rect x="78" y="74" width="1014" height="717" fill="url(#grid)" />
    <g transform="translate(-.5 -.5)">
      <SheetFrame />
      <g stroke="#b9625c">
        <Controller />
        <Programmer />
        <LedDriver />
        <Decoupling />
        <RfStage />
        <Channels />
      </g>
      <path d={wires.join("")} stroke="#6cba6c" />
      {junctions.map(([x, y]) => (
        <circle key={`${x}-${y}`} cx={x} cy={y} r={2} fill="#0f950f" />
      ))}
    </g>
  </svg>
);

/* ---------- window ---------- */

const TitleBar = () => (
  <header className="relative flex h-[18px] items-center justify-center bg-linear-to-b from-[#ececec] to-[#dadada]">
    <div className="absolute left-[7px] flex gap-[6px]">
      <button type="button" aria-label="Close" className="h-[10px] w-[10px] rounded-full bg-[#fc5b57]" />
      <button type="button" aria-label="Minimize" className="h-[10px] w-[10px] rounded-full bg-[#fdb92c]" />
      <button type="button" aria-label="Zoom" className="h-[10px] w-[10px] rounded-full bg-[#25c83d]" />
    </div>
    <h1 className="font-['Inter',sans-serif] text-[10px] text-[#6a6a6a]">
      [ AC316D /] (/Volumes/OsX/Data/Documents/labs/kicad/AC316D)
    </h1>
  </header>
);

const Toolbar = () => (
  <div
    role="toolbar"
    aria-label="Main"
    className="flex h-[30px] items-center border-t border-b-2 border-t-[#b4b4b4] border-b-[#8c8c8c] bg-linear-to-b from-[#e6e6e6] to-[#c9c9c9] pl-1"
  >
    {mainTools.map((tool, i) =>
      tool ? (
        <button key={tool.name} type="button" aria-label={tool.name} className="flex w-[26px] shrink-0 justify-center">
          <Icon faded={tool.faded}>{tool.icon}</Icon>
        </button>
      ) : (
        <div key={i} className="flex w-2 shrink-0 justify-center">
          <span className="h-5 w-px bg-[#b2b2b2]" />
        </div>
      ),
    )}
  </div>
);

const App = () => {
  return (
    <div className="min-h-screen bg-[#fefefe] px-[43px] pt-6 pb-[62px] font-['Liberation_Sans',Arial,sans-serif]">
      <div className="overflow-hidden rounded-[4px] bg-[#ebebeb] shadow-[0_20px_34px_rgba(0,0,0,0.55),0_0_4px_rgba(0,0,0,0.25)]">
        <TitleBar />
        <Toolbar />

        <main className="flex">
          <div className="w-[31px] shrink-0 border-r-2 border-[#a0a0a0] bg-linear-to-b from-[#ececec] to-[#c9c9c9]">
            <div className="flex h-[162px] flex-col items-center justify-between pt-1">
              {optionTools.map((tool) => (
                <SideButton key={tool.name} tool={tool} />
              ))}
            </div>
          </div>
          <div className="min-w-0 flex-1">
            <Schematic />
          </div>
          <div className="w-[31px] shrink-0 border-l-2 border-[#b0b0b0] bg-linear-to-b from-[#ececec] to-[#c9c9c9]">
            <div className="flex h-[533px] flex-col items-center justify-between pt-1 pr-0.5">
              {placeTools.map((tool) => (
                <SideButton key={tool.name} tool={tool} />
              ))}
            </div>
          </div>
        </main>

        <div className="h-[23px] border-t-2 border-b border-[#b0b0b0] bg-[#ebebeb]" />
        <footer className="grid h-[14px] grid-cols-[508fr_49fr_147fr_225fr_151fr] items-center pl-1 text-[9px] leading-none whitespace-pre text-[#333]">
          <span>{"Загрузка завершена </Volumes/OsX/Data/Documents/labs/kicad/AC316D/AC316D.sch>"}</span>
          <span>Z 1,23</span>
          <span>{"X 156,20  Y 88,90"}</span>
          <span>{"dx 156,20  dy 88,90  dist 179,73"}</span>
          <span>мм</span>
        </footer>
      </div>
    </div>
  );
};

export default App;
